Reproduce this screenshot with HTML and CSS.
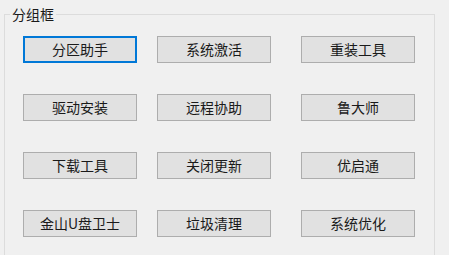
FILE: index.html
```html
<!DOCTYPE html>
<html>
<head>
<meta charset="utf-8">
<link rel="stylesheet" href="styles.css">
</head>
<body>
<fieldset class="group">
  <legend class="group-title">分组框</legend>
  <div class="grid">
    <button class="btn focused">分区助手</button>
    <button class="btn">系统激活</button>
    <button class="btn">重装工具</button>
    <button class="btn">驱动安装</button>
    <button class="btn">远程协助</button>
    <button class="btn">鲁大师</button>
    <button class="btn">下载工具</button>
    <button class="btn">关闭更新</button>
    <button class="btn">优启通</button>
    <button class="btn">金山U盘卫士</button>
    <button class="btn">垃圾清理</button>
    <button class="btn">系统优化</button>
  </div>
</fieldset>
</body>
</html>
```
FILE: styles.css
```css
html, body {
  margin: 0;
  padding: 0;
  background: #f0f0f0;
  width: 449px;
  height: 255px;
  overflow: hidden;
}
body {
  padding: 5px 0 0 4px;
  box-sizing: border-box;
  font-family: "Noto Sans CJK SC", "Microsoft YaHei", sans-serif;
  color: #1a1a1a;
}
.group {
  margin: 0;
  padding: 0 0 22px 0;
  width: 431px;
  box-sizing: border-box;
  border: 1px solid #dcdcdc;
  border-bottom: none;
  min-width: 0;
}
.group-title {
  margin-left: 5px;
  padding: 0 2px;
  font-size: 14px;
  line-height: 18px;
  height: 18px;
}
.grid {
  display: grid;
  grid-template-columns: 134px 144px 114px;
  row-gap: 31px;
  padding: 13px 0 0 18px;
}
.btn {
  width: 114px;
  height: 27px;
  margin: 0;
  padding: 0;
  box-sizing: border-box;
  background: #e1e1e1;
  border: 1px solid #adadad;
  border-radius: 0;
  font-family: "Noto Sans CJK SC", "Microsoft YaHei", sans-serif;
  font-size: 14px;
  line-height: 25px;
  color: #1a1a1a;
}
.btn.focused {
  border: 2px solid #0078d7;
  line-height: 23px;
}
```
